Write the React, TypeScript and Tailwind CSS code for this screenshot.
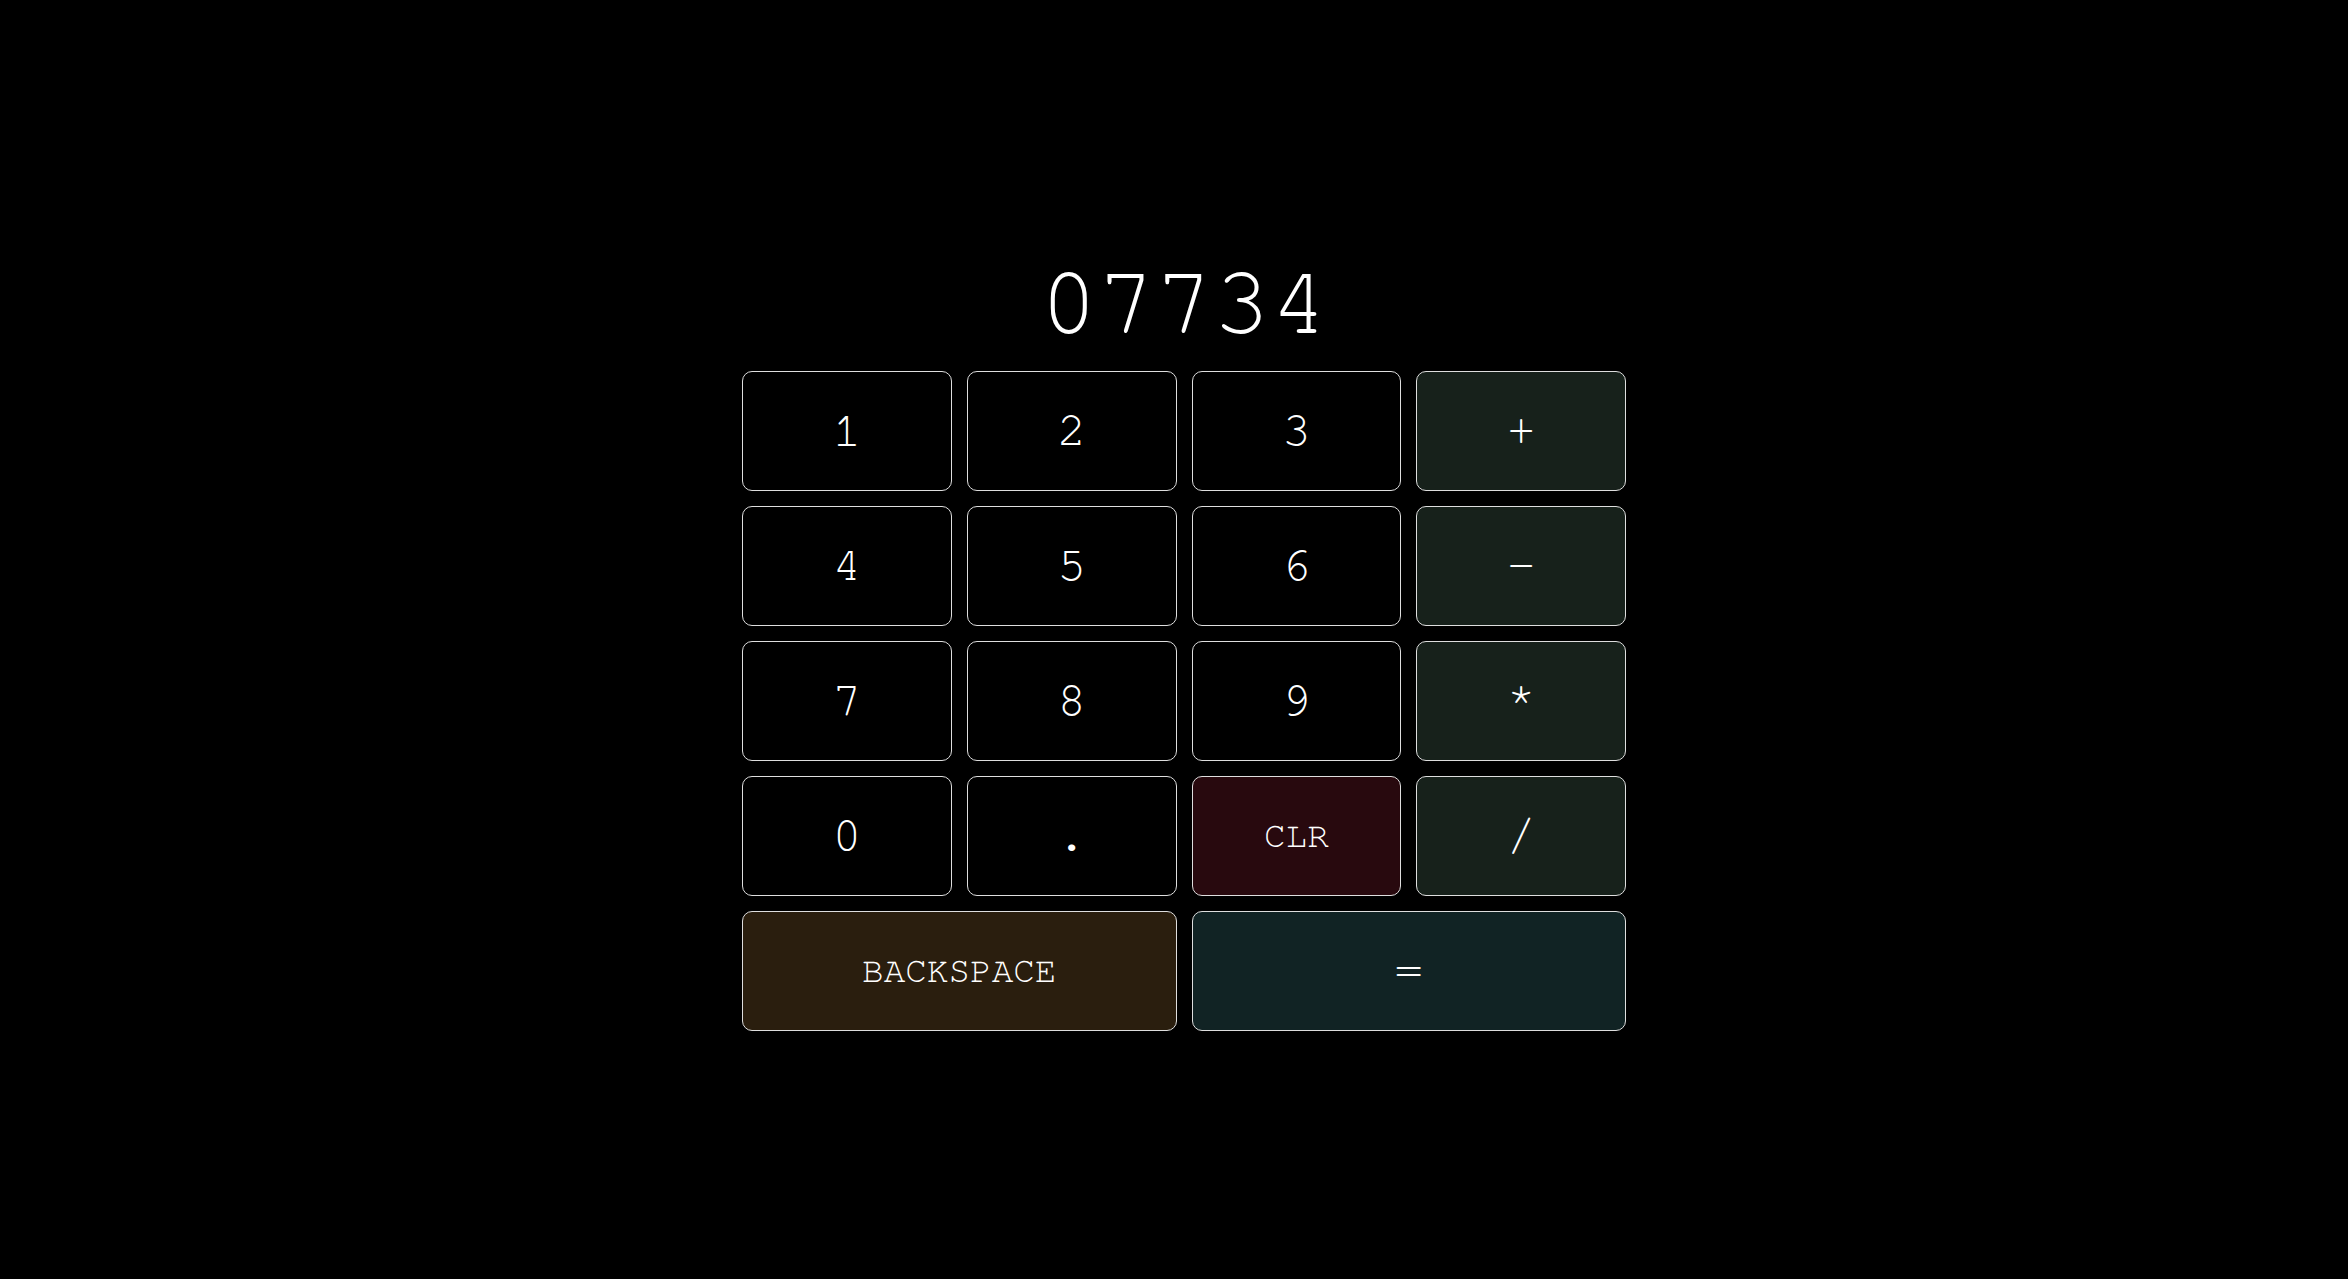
import React, { useState } from "react";

type Key = {
  label: string;
  kind: "num" | "op" | "clear" | "back" | "equals";
  wide?: boolean;
};

const keys: Key[] = [
  { label: "1", kind: "num" },
  { label: "2", kind: "num" },
  { label: "3", kind: "num" },
  { label: "+", kind: "op" },
  { label: "4", kind: "num" },
  { label: "5", kind: "num" },
  { label: "6", kind: "num" },
  { label: "-", kind: "op" },
  { label: "7", kind: "num" },
  { label: "8", kind: "num" },
  { label: "9", kind: "num" },
  { label: "*", kind: "op" },
  { label: "0", kind: "num" },
  { label: ".", kind: "num" },
  { label: "CLR", kind: "clear" },
  { label: "/", kind: "op" },
  { label: "BACKSPACE", kind: "back", wide: true },
  { label: "=", kind: "equals", wide: true },
];

const kindClass: Record<Key["kind"], string> = {
  num: "bg-black text-5xl",
  op: "bg-[#17211b] text-5xl",
  clear: "bg-[#28090e] text-4xl",
  back: "bg-[#2a1e0e] text-4xl",
  equals: "bg-[#112324] text-5xl",
};

const App = () => {
  const [value, setValue] = useState("07734");

  const press = (key: Key) => {
    if (key.kind === "clear") return setValue("");
    if (key.kind === "back") return setValue((v) => v.slice(0, -1));
    if (key.kind === "equals") {
      try {
        // eslint-disable-next-line no-new-func
        setValue(String(Function(`return (${value})`)()));
      } catch {
        setValue("ERR");
      }
      return;
    }
    setValue((v) => v + key.label);
  };

  return (
    <div className="min-h-screen bg-black flex flex-col items-center justify-center pl-[20px] pt-[8px] text-white font-['Nimbus_Mono_PS','FreeMono','Nimbus_Mono_L','Courier','Liberation_Mono',monospace]">
      <div className="text-8xl leading-none h-[96px] mb-[19px]">{value}</div>
      <div className="grid grid-cols-4 gap-[15px] w-[884px]">
        {keys.map((key) => (
          <button
            key={key.label}
            onClick={() => press(key)}
            className={`h-[120px] rounded-[10px] border border-[#dedede] flex items-center justify-center text-white ${
              key.wide ? "col-span-2" : ""
            } ${kindClass[key.kind]}`}
          >
            {key.label}
          </button>
        ))}
      </div>
    </div>
  );
};

export default App;
